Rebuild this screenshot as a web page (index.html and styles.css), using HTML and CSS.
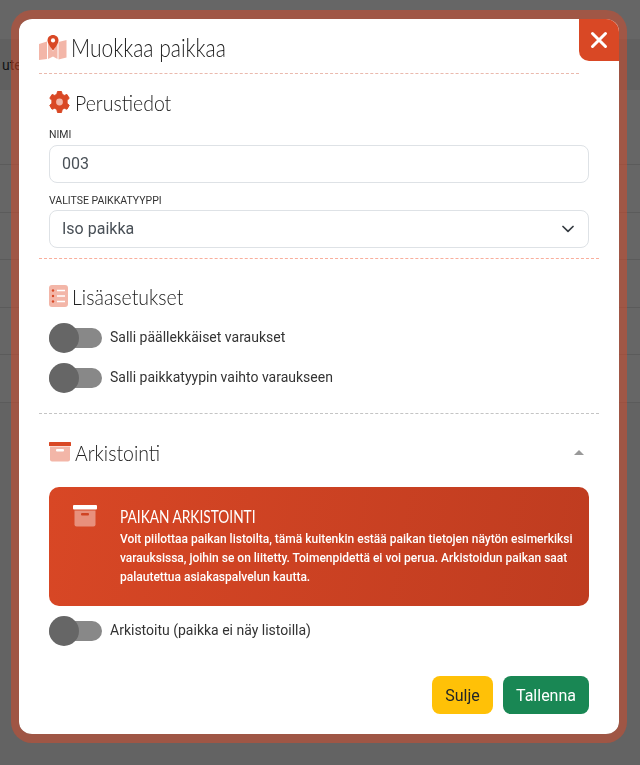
FILE: index.html
```html
<!DOCTYPE html>
<html>

<head>
    <title>Muokkaa paikkaa</title>
    <link rel="stylesheet" href="styles.css">
</head>

<body>
    <!-- Page behind the dialog -->
    <div class="page">
        <div class="page-top"></div>
        <div class="page-band">ute</div>
        <div class="page-row page-row-first"></div>
        <div class="page-row"></div>
        <div class="page-row"></div>
        <div class="page-row"></div>
        <div class="page-row"></div>
        <div class="page-row"></div>
    </div>
    <div class="backdrop"></div>

    <div class="dialog">
        <button class="close-button" aria-label="Sulje">
            <svg width="18" height="18" viewBox="0 0 18 18">
                <path d="M2.500 2.500L15.500 15.500M15.500 2.500L2.500 15.500" stroke="#ffffff" stroke-width="3" stroke-linecap="round" />
            </svg>
        </button>

        <div class="dialog-header">
            <svg class="title-icon" width="28" height="25" viewBox="0 0 28 25">
                <path d="M0 9L8 6.500V24L0 25ZM9 7L12 13L14 16.500L16 13L18.500 7V24L14 21.500L9 24ZM19.500 7L27.500 5V22.500L19.500 24.500Z" fill="#f3b6a8" />
                <path d="M14 0C10.800 0 8.500 2.400 8.500 5.400C8.500 9 14 15.500 14 15.500C14 15.500 19.500 9 19.500 5.400C19.500 2.400 17.200 0 14 0Z" fill="#d94825" />
                <circle cx="14" cy="5.400" r="2.100" fill="#ffffff" />
            </svg>
            <h1 class="dialog-title"><span class="narrow narrow-title">Muokkaa paikkaa</span></h1>
        </div>

        <h2 class="section-title section-basic">
            <svg width="21" height="22" viewBox="0 0 21 22">
                <path d="M8.500 0.500H12.500L13.200 3.300L15.300 4.400L18 3.500L20.200 7.300L18.100 9.300V12.200L20.200 14.400L18 18.200L15.300 17.300L13.200 18.400L12.500 21.500H8.500L7.800 18.400L5.700 17.300L3 18.200L0.800 14.400L2.900 12.200V9.300L0.800 7.300L3 3.500L5.700 4.400L7.800 3.300Z" fill="#d94825" stroke="#d94825" stroke-linejoin="round" />
                <circle cx="10.500" cy="11" r="3.400" fill="#f3b6a8" />
            </svg>
            <span class="narrow">Perustiedot</span>
        </h2>

        <div class="field field-name">
            <label class="field-label">Nimi</label>
            <div class="input-box">003</div>
        </div>
        <div class="field field-type">
            <label class="field-label">Valitse paikkatyyppi</label>
            <div class="input-box select-box">
                Iso paikka
                <svg width="12" height="8" viewBox="0 0 12 8">
                    <path d="M1 1.500L6 6.300L11 1.500" fill="none" stroke="#343a40" stroke-width="1.700" stroke-linecap="round" stroke-linejoin="round" />
                </svg>
            </div>
        </div>

        <hr class="divider divider-red">

        <h2 class="section-title section-settings">
            <svg width="19" height="22" viewBox="0 0 19 22">
                <rect width="19" height="22" rx="3" fill="#f3b6a8" />
                <circle cx="4" cy="5.500" r="1.200" fill="#d94825" />
                <circle cx="4" cy="11" r="1.200" fill="#d94825" />
                <circle cx="4" cy="16.500" r="1.200" fill="#d94825" />
                <path d="M8 5.500H16M8 11H16M8 16.500H16" stroke="#ffffff" stroke-width="1.600" />
            </svg>
            <span class="narrow">Lisäasetukset</span>
        </h2>

        <div class="toggle-row">
            <span class="toggle"></span>
            <span class="toggle-label">Salli päällekkäiset varaukset</span>
        </div>
        <div class="toggle-row">
            <span class="toggle"></span>
            <span class="toggle-label">Salli paikkatyypin vaihto varaukseen</span>
        </div>

        <hr class="divider divider-grey">

        <div class="archive-head">
            <h2 class="section-title section-archive">
                <svg width="22" height="20" viewBox="0 0 22 20">
                    <rect x="0" y="0" width="22" height="4" rx="0.500" fill="#d94825" />
                    <path d="M1 4.500H21V17.500A2 2 0 0 1 19 19.500H3A2 2 0 0 1 1 17.500Z" fill="#f3b6a8" />
                    <rect x="7" y="7" width="8" height="2.500" rx="1" fill="#ffffff" />
                </svg>
                <span class="narrow">Arkistointi</span>
            </h2>
            <span class="caret-up"></span>
        </div>

        <div class="archive-card">
            <svg class="archive-icon" width="24" height="22" viewBox="0 0 24 22">
                <rect x="0" y="0" width="24" height="4.500" rx="1" fill="#ffffff" />
                <path d="M1.500 5.500H22.500V19.500A2 2 0 0 1 20.500 21.500H3.500A2 2 0 0 1 1.500 19.500Z" fill="#e8907c" />
                <rect x="8" y="8" width="8" height="2.500" rx="1" fill="#cf4323" />
            </svg>
            <div class="archive-text">
                <h3 class="archive-title"><span class="narrow narrow-card">PAIKAN ARKISTOINTI</span></h3>
                <p class="archive-desc">Voit piilottaa paikan listoilta, tämä kuitenkin estää paikan tietojen näytön esimerkiksi varauksissa, joihin se on liitetty. Toimenpidettä ei voi perua. Arkistoidun paikan saat palautettua asiakaspalvelun kautta.</p>
            </div>
        </div>

        <div class="toggle-row toggle-archive">
            <span class="toggle"></span>
            <span class="toggle-label">Arkistoitu (paikka ei näy listoilla)</span>
        </div>

        <div class="dialog-footer">
            <button class="btn btn-close">Sulje</button>
            <button class="btn btn-save">Tallenna</button>
        </div>
    </div>
</body>

</html>
```

FILE: styles.css
```css
body {
    font-family: Roboto, Arial, sans-serif;
    margin: 0;
    padding: 0;
    width: 640px;
    height: 765px;
    overflow: hidden;
    background-color: #ffffff;
}

/* Page behind the dialog */

.page {
    height: 765px;
    background-color: #f7f7f7;
}

.page-top {
    height: 39px;
    background-color: #ffffff;
}

.page-band {
    height: 51px;
    line-height: 52px;
    padding-left: 2px;
    font-size: 14px;
    color: #333333;
    background-color: #f0f0f0;
}

.page-row {
    height: 46.500px;
    background-color: #ffffff;
    border-bottom: 1px solid #e4e4e4;
}

.page-row-first {
    height: 74px;
}

.backdrop {
    position: fixed;
    inset: 0;
    background-color: rgba(0, 0, 0, 0.6);
}

/* Dialog */

.dialog {
    position: fixed;
    left: 11px;
    top: 10px;
    box-sizing: border-box;
    width: 616px;
    height: 733px;
    padding: 9px 20px 0;
    background-color: #ffffff;
    background-clip: padding-box;
    border-style: solid;
    border-color: rgba(217, 72, 37, 0.5);
    border-width: 9px 8px;
    border-radius: 21px;
}

.close-button {
    position: absolute;
    top: 0;
    right: 0;
    width: 40px;
    height: 42px;
    padding: 0;
    border: 0;
    border-radius: 0 13px 0 10px;
    background-color: #d94825;
    display: flex;
    align-items: center;
    justify-content: center;
}

.dialog-header {
    display: flex;
    align-items: center;
    gap: 4px;
    box-sizing: border-box;
    width: 540px;
    height: 46px;
    padding-bottom: 6px;
    border-bottom: 1px dashed #eab9ad;
}

.dialog-title {
    margin: 0 0 2px;
    font-family: Lato, sans-serif;
    font-size: 25px;
    font-weight: 300;
    color: #222222;
}

/* Heading font is narrower than Lato */
.narrow {
    display: inline-block;
    transform: scaleX(0.885);
    transform-origin: left center;
}

.narrow-title {
    transform: scaleX(0.84);
}

.narrow-card {
    transform: scaleX(0.83);
}

.section-title {
    display: flex;
    align-items: center;
    gap: 5px;
    margin: 0;
    font-family: Lato, sans-serif;
    font-size: 22px;
    font-weight: 300;
    color: #222222;
}

.section-basic {
    margin: 15px 0 0 10px;
    height: 26px;
}

.section-archive {
    gap: 4px;
}

.field {
    margin-left: 10px;
    width: 540px;
}

.field-name {
    margin-top: 14px;
}

.field-type {
    margin-top: 12px;
}

.field-label {
    display: block;
    height: 12px;
    line-height: 12px;
    margin-bottom: 4px;
    font-size: 10.500px;
    text-transform: uppercase;
    color: #333333;
}

.field-type .field-label {
    margin-bottom: 3px;
}

.input-box {
    box-sizing: border-box;
    height: 38px;
    line-height: 36px;
    padding: 0 12px;
    font-size: 16px;
    color: #495057;
    border: 1px solid #dee2e6;
    border-radius: 8px;
}

.select-box {
    display: flex;
    align-items: center;
    justify-content: space-between;
    padding-right: 14px;
}

.divider {
    margin: 0;
    border: 0;
    width: 560px;
}

.divider-red {
    margin-top: 10px;
    border-top: 1px dashed #f9ae9c;
}

.divider-grey {
    margin-top: 20px;
    border-top: 1px dashed #c4c4c4;
}

.section-settings {
    margin: 24px 0 0 10px;
    height: 26px;
    gap: 4px;
}

.toggle-row {
    display: flex;
    align-items: center;
    gap: 8px;
    height: 30px;
    margin: 10px 0 0 10px;
    font-size: 14px;
    color: #333333;
}

.section-settings + .toggle-row {
    margin-top: 14px;
}

.toggle-label {
    margin-bottom: 2px;
}

.toggle {
    position: relative;
    display: block;
    width: 53px;
    height: 20px;
    border-radius: 10px;
    background-color: #888888;
}

/* The knob sticks out of the track */
.toggle::before {
    content: "";
    position: absolute;
    left: 0;
    top: -5px;
    width: 30px;
    height: 30px;
    border-radius: 50%;
    background-color: #666666;
}

.archive-head {
    display: flex;
    align-items: center;
    justify-content: space-between;
    width: 540px;
    height: 26px;
    margin: 25px 0 0 10px;
}

.caret-up {
    width: 0;
    height: 0;
    margin-right: 5px;
    border-left: 5px solid transparent;
    border-right: 5px solid transparent;
    border-bottom: 5px solid #999999;
}

.archive-card {
    display: flex;
    box-sizing: border-box;
    width: 540px;
    height: 119px;
    margin: 22px 0 0 10px;
    padding: 18px 15px 0 24px;
    border-radius: 10px;
    color: #ffffff;
    background: linear-gradient(100deg, #d84725, #bf3c20);
}

.archive-icon {
    flex-shrink: 0;
}

.archive-text {
    margin-left: 23px;
}

.archive-title {
    margin: 1px 0 2px;
    font-family: Lato, sans-serif;
    font-size: 16.500px;
    font-weight: 400;
    line-height: 22px;
}

.archive-desc {
    margin: 0;
    font-size: 12px;
    font-weight: 500;
    line-height: 19px;
}

.toggle-archive {
    margin-top: 10px;
}

.dialog-footer {
    display: flex;
    justify-content: flex-end;
    gap: 10px;
    width: 540px;
    margin: 30px 0 0 10px;
}

.btn {
    height: 38px;
    border: 0;
    border-radius: 8px;
    font-family: Roboto, Arial, sans-serif;
    font-size: 16px;
}

.btn-close {
    width: 61px;
    color: #212529;
    background-color: #ffc107;
}

.btn-save {
    width: 86px;
    color: #ffffff;
    background-color: #198754;
}
```
